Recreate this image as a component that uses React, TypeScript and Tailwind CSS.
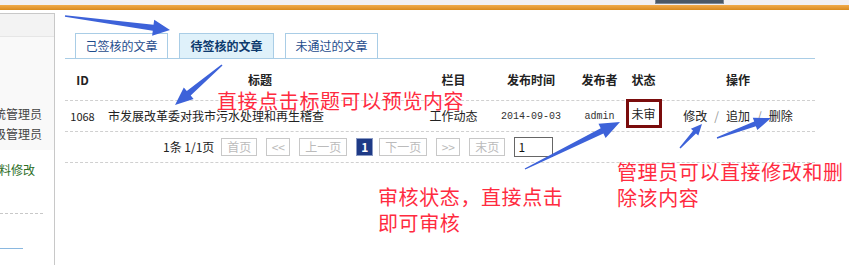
const arrows = [
  { x1: 65, y1: 16, x2: 170, y2: 30, sw: 6, hw: 16, hl: 17 },
  { x1: 222, y1: 65, x2: 175, y2: 105, sw: 6, hw: 15, hl: 18 },
  { x1: 525, y1: 169, x2: 620, y2: 122, sw: 6, hw: 16, hl: 20 },
  { x1: 680, y1: 148, x2: 702, y2: 124, sw: 4, hw: 10, hl: 11 },
  { x1: 717, y1: 138, x2: 771, y2: 118, sw: 5, hw: 13, hl: 17 },
];

function arrowPoints(a: (typeof arrows)[number]) {
  const dx = a.x2 - a.x1;
  const dy = a.y2 - a.y1;
  const len = Math.hypot(dx, dy);
  const ux = dx / len;
  const uy = dy / len;
  const nx = -uy;
  const ny = ux;
  const bx = a.x2 - ux * a.hl;
  const by = a.y2 - uy * a.hl;
  const pts = [
    [a.x1 + nx * 0.7, a.y1 + ny * 0.7],
    [bx + nx * (a.sw / 2), by + ny * (a.sw / 2)],
    [bx + nx * (a.hw / 2), by + ny * (a.hw / 2)],
    [a.x2, a.y2],
    [bx - nx * (a.hw / 2), by - ny * (a.hw / 2)],
    [bx - nx * (a.sw / 2), by - ny * (a.sw / 2)],
    [a.x1 - nx * 0.7, a.y1 - ny * 0.7],
  ];
  return pts.map((p) => p.map((v) => v.toFixed(1)).join(',')).join(' ');
}

const tabs = [
  { label: '己签核的文章', active: false },
  { label: '待签核的文章', active: true },
  { label: '未通过的文章', active: false },
];

const pager = [
  { label: '首页', w: 'w-[36px]' },
  { label: '<<', w: 'w-[24px]' },
  { label: '上一页', w: 'w-[48px]' },
];
const pagerNext = [
  { label: '下一页', w: 'w-[48px]' },
  { label: '>>', w: 'w-[24px]' },
  { label: '末页', w: 'w-[36px]' },
];

export default function App() {
  return (
    <div className="relative w-[849px] h-[265px] overflow-hidden bg-white font-['Noto_Sans_CJK_SC',sans-serif] text-[12px] text-[#222]">
      {/* top bar */}
      <div className="h-[5px] bg-[#f2f0f2] flex">
        <div className="ml-[655px] w-[69px] h-[4px] bg-[#4b5866] border-x border-b border-[#7d8894]" />
      </div>
      <div className="h-[5px] bg-gradient-to-b from-[#f1ab4a] to-[#d98a1c]" />

      <div className="flex">
        {/* sidebar */}
        <aside className="w-[55px] h-[255px] shrink-0 mt-[3px] border-t border-r border-[#c8c8c8] overflow-hidden">
          <div className="h-[23px] bg-[#f3f3f3] border-b border-[#e6e6e6]" />
          <div className="h-[113px] bg-[#f9f9f9] pt-[67px] text-[#444] leading-[20px] whitespace-nowrap">
            <div className="ml-[-18px]">系统管理员</div>
            <div className="ml-[-18px]">超级管理员</div>
          </div>
          <div className="pt-[10px] leading-[20px] text-[#2c6e1f] whitespace-nowrap">
            <div className="ml-[-13px]">资料修改</div>
          </div>
          <div className="mt-[33px] w-[43px] border-t border-dashed border-[#c8c8c8]" />
          <div className="mt-[34px] w-[23px] border-t border-[#8ab8e0]" />
        </aside>

        {/* main */}
        <main className="pl-[10px] pt-[23px] w-[760px]">
          <div className="flex gap-[11px] pl-[10px] border-b border-[#a9cde6] w-[750px]">
            {tabs.map((t) => (
              <div
                key={t.label}
                className={`h-[25px] flex items-center justify-center border-t border-x border-[#a9cde6] ${
                  t.active ? 'w-[95px] bg-[#dff1fa] font-bold text-[#0d3a6e]' : 'w-[93px] text-[#1e4c8c]'
                }`}
              >
                {t.label}
              </div>
            ))}
          </div>

          {/* header */}
          <div className="grid grid-cols-[35px_320px_67px_88px_49px_39px_150px] h-[42px] items-center border-b border-dashed border-[#d0d0d0] font-bold text-center w-[750px]">
            <div>ID</div>
            <div>标题</div>
            <div>栏目</div>
            <div>发布时间</div>
            <div>发布者</div>
            <div>状态</div>
            <div>操作</div>
          </div>

          {/* row */}
          <div className="grid grid-cols-[35px_320px_67px_88px_49px_39px_150px] h-[31px] items-center border-b border-dashed border-[#d0d0d0] text-center w-[750px]">
            <div className="text-[11px]">1068</div>
            <div className="text-left pl-[8px]">市发展改革委对我市污水处理和再生稽查</div>
            <div>工作动态</div>
            <div className="font-['Liberation_Mono',monospace] text-[10px] text-[#333]">2014-09-03</div>
            <div className="font-['Liberation_Mono',monospace] text-[10px] text-[#333]">admin</div>
            <div className="flex justify-center self-start -mt-[2px]">
              <div className="w-[36px] h-[29px] border-[3px] border-[#7a0c0c] flex items-center justify-center bg-white">
                未审
              </div>
            </div>
            <div className="flex justify-center gap-[7px]">
              <span>修改</span>
              <span className="text-[#999]">/</span>
              <span>追加</span>
              <span className="text-[#999]">/</span>
              <span>删除</span>
            </div>
          </div>

          {/* pager */}
          <div className="h-[31px] flex items-center pl-[98px] gap-[9px] border-b border-dashed border-[#d0d0d0] w-[750px]">
            <span className="text-[#222] mr-[-2px]">1条 1/1页</span>
            {pager.map((p) => (
              <span
                key={p.label}
                className={`${p.w} h-[18px] border border-[#c8c8c8] text-[#bbb] flex items-center justify-center`}
              >
                {p.label}
              </span>
            ))}
            <span className="w-[17px] h-[18px] bg-[#1e3a86] border border-[#8a9ac4] text-white font-bold flex items-center justify-center mr-[-3px]">
              1
            </span>
            {pagerNext.map((p) => (
              <span
                key={p.label}
                className={`${p.w} h-[18px] border border-[#c8c8c8] text-[#bbb] flex items-center justify-center`}
              >
                {p.label}
              </span>
            ))}
            <span className="w-[39px] h-[20px] border border-[#666] pl-[3px] leading-[18px] text-[#111]">1</span>
          </div>
        </main>
      </div>

      {/* annotations */}
      <div className="absolute left-[217px] top-[91px] text-[20px] leading-[20px] tracking-[0.6px] text-[#ff2b3f] whitespace-nowrap">
        直接点击标题可以预览内容
      </div>
      <div className="absolute left-[378px] top-[184px] text-[20px] leading-[26px] tracking-[0.6px] text-[#ff2b3f] whitespace-nowrap">
        <div>审核状态，直接点击</div>
        <div>即可审核</div>
      </div>
      <div className="absolute left-[617px] top-[159px] text-[20px] leading-[26px] tracking-[0.6px] text-[#ff2b3f] whitespace-nowrap">
        <div>管理员可以直接修改和删</div>
        <div>除该内容</div>
      </div>

      <svg className="absolute inset-0 pointer-events-none" width="849" height="265" viewBox="0 0 849 265">
        {arrows.map((a, i) => (
          <polygon key={i} points={arrowPoints(a)} fill="#3d62d9" />
        ))}
      </svg>
    </div>
  );
}
